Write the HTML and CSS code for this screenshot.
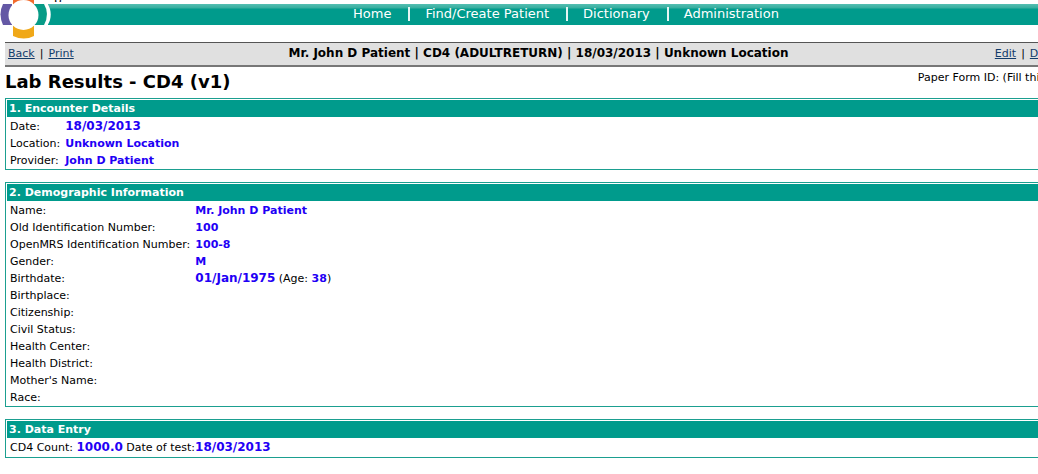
FILE: index.html
```
<!DOCTYPE html>
<html lang="en">
<head>
<meta charset="utf-8">
<title>Lab Results - CD4 (v1)</title>
<link rel="stylesheet" href="styles.css">
</head>
<body>
<div class="page">
  <header class="banner">
    <span class="tagline">p</span>
    <svg class="logo" width="52" height="40" viewBox="0 0 52 40" aria-hidden="true">
      <path d="M42 3H47C52 10 52 19 47 26H42Z" fill="#fff"/>
      <path d="M3 4H12V25H3Q-2 14 3 4Z" fill="#6458a5"/>
      <path d="M34 4H44Q50 14 44 25H34Z" fill="#079b87"/>
      <path d="M13 0H34V6H13Z" fill="#f26a2b"/>
      <path d="M13 25H34V36Q24 41 13 36Z" fill="#f0a818"/>
      <circle cx="23.500" cy="15" r="15" fill="#fff"/>
    </svg>
    <nav class="nav">
      <a href="#home">Home</a>
      <a href="#patients">Find/Create Patient</a>
      <a href="#dictionary">Dictionary</a>
      <a href="#administration">Administration</a>
    </nav>
  </header>
  <main class="content">
    <div class="toolbar">
      <div class="actions"><a href="#back">Back</a><span>|</span><a href="#print">Print</a></div>
      <strong class="summary">Mr. John D Patient | CD4 (ADULTRETURN) | 18/03/2013 | Unknown Location</strong>
      <div class="actions"><a href="#edit">Edit</a><span>|</span><a href="#delete">Delete</a></div>
    </div>
    <div class="form-head">
      <h1>Lab Results - CD4 (v1)</h1>
      <span>Paper Form ID: (Fill this in)</span>
    </div>
    <section class="box">
      <h2>1. Encounter Details</h2>
      <table class="fields">
        <tr><th scope="row">Date:</th><td><b class="date">18/03/2013</b></td></tr>
        <tr><th scope="row">Location:</th><td><b>Unknown Location</b></td></tr>
        <tr><th scope="row">Provider:</th><td><b>John D Patient</b></td></tr>
      </table>
    </section>
    <section class="box">
      <h2>2. Demographic Information</h2>
      <table class="fields">
        <tr><th scope="row">Name:</th><td><b>Mr. John D Patient</b></td></tr>
        <tr><th scope="row">Old Identification Number:</th><td><b>100</b></td></tr>
        <tr><th scope="row">OpenMRS Identification Number:</th><td><b>100-8</b></td></tr>
        <tr><th scope="row">Gender:</th><td><b>M</b></td></tr>
        <tr><th scope="row">Birthdate:</th><td><b class="date">01/Jan/1975</b> (Age: <b>38</b>)</td></tr>
        <tr><th scope="row">Birthplace:</th><td></td></tr>
        <tr><th scope="row">Citizenship:</th><td></td></tr>
        <tr><th scope="row">Civil Status:</th><td></td></tr>
        <tr><th scope="row">Health Center:</th><td></td></tr>
        <tr><th scope="row">Health District:</th><td></td></tr>
        <tr><th scope="row">Mother's Name:</th><td></td></tr>
        <tr><th scope="row">Race:</th><td></td></tr>
      </table>
    </section>
    <section class="box">
      <h2>3. Data Entry</h2>
      <p class="entry">CD4 Count: <b class="date">1000.0</b> Date of test:<b class="date">18/03/2013</b></p>
    </section>
  </main>
</div>
</body>
</html>
```
FILE: styles.css
```
html {
  overflow: hidden;
}

body {
  margin: 0;
  background: #fff;
  color: #000;
  font: 11px/17px Verdana, "DejaVu Sans", sans-serif;
}

/* The form is slightly wider than its window. */
.page {
  width: calc(100% + 34px);
  white-space: nowrap;
}

.banner {
  position: relative;
  padding-top: 4px;
}

.nav {
  display: flex;
  justify-content: center;
  margin-left: 48px;
  padding-left: 12px;
  background: linear-gradient(#55bfb2 0, #35ad9e 4px, #009b8c 5px);
  font-size: 13px;
  line-height: 20px;
  padding-bottom: 1px;
}

.nav a {
  position: relative;
  padding: 0 17px;
  color: #fff;
  text-decoration: none;
}

.nav a + a::before {
  content: "";
  position: absolute;
  left: 0;
  top: 3px;
  width: 2px;
  height: 14px;
  background: #e5f5f3;
}

.logo {
  position: absolute;
  left: 0;
  top: 0;
}

.tagline {
  position: absolute;
  left: 54px;
  top: 0;
  height: 2px;
  overflow: hidden;
  font-size: 12px;
  line-height: 0;
}

.content {
  padding: 17px 0 0 5px;
}

.toolbar {
  display: grid;
  grid-template-columns: 1fr auto 1fr;
  padding: 2px 3px 3px;
  border-top: 1px solid #555;
  border-bottom: 2px solid #777;
  background: #e0e0e0;
}

.toolbar a {
  color: #123c6b;
}

.summary {
  font-size: 12px;
}

.actions span {
  padding: 0 5px;
}

.actions:last-child {
  padding-right: 3px;
  text-align: right;
}

.form-head {
  display: flex;
  justify-content: space-between;
  padding: 2px 9px 1px 0;
}

h1 {
  margin: 2px 0 4px;
  font-size: 18px;
  line-height: 22px;
}

.box {
  margin-bottom: 12px;
  padding: 1px 1px 0;
  border: 1px solid #1b9f90;
}

h2 {
  margin: 0 0 1px;
  padding: 0 2px;
  background: #009b8c;
  color: #fff;
  font-size: 11px;
  line-height: 17px;
}

.fields {
  border-collapse: collapse;
}

.fields th {
  padding: 0 3px;
  font-weight: normal;
  text-align: left;
}

.fields td {
  height: 17px;
  padding: 0 3px 0 2px;
}

.fields b,
.entry b {
  color: #1f00f5;
}

.fields .date,
.entry .date {
  font-size: 12px;
  line-height: 16px;
}

.entry {
  margin: 0;
  padding: 0 3px 1px;
}
```
